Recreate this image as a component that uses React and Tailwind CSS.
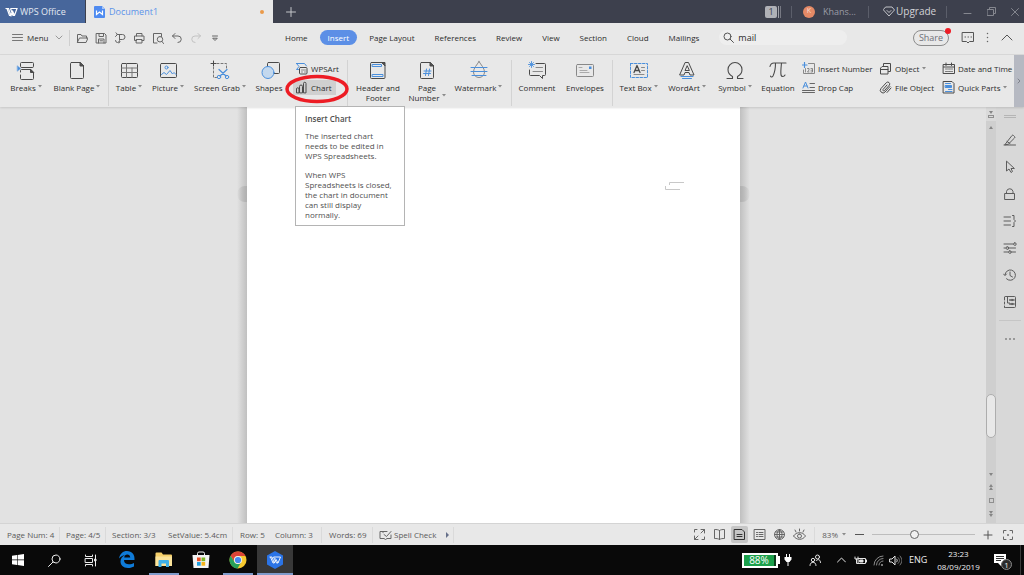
import React, { useState } from 'react';
import clsx from 'clsx';

const DARK = '#4a4a4a';
const BLUE = '#4a8fdc';

// Small svg wrapper, children are drawn at 1 unit = 1px
const Icon = ({ w = 20, h = w, color = DARK, sw = 1, className, children }) => (
    <svg
        width={w}
        height={h}
        viewBox={`0 0 ${w} ${h}`}
        fill="none"
        stroke={color}
        strokeWidth={sw}
        strokeLinejoin="round"
        strokeLinecap="round"
        className={clsx('shrink-0', className)}
        aria-hidden="true"
    >
        {children}
    </svg>
);

const Caret = ({ className }) => (
    <svg width="4" height="3" viewBox="0 0 4 3" className={clsx('inline-block shrink-0', className)} aria-hidden="true">
        <path d="M0 0h4L2 2.6z" fill="#8a8a8a" />
    </svg>
);

const VLine = ({ className }) => <div className={clsx('w-px shrink-0', className)} />;

/* ---------- ribbon icons ---------- */

const BreaksIcon = () => (
    <Icon>
        <path d="M5.500 7.500a1 1 0 0 1-1-1v-3a1 1 0 0 1 1-1h11a1 1 0 0 1 1 1v3a1 1 0 0 1-1 1zM4.500 12v-1.500a1 1 0 0 1 1-1h9l3 3v6a1 1 0 0 1-1 1h-11a1 1 0 0 1-1-1V15" />
        <path d="M14.500 9.500v3h3z" fill={DARK} />
        <path d="M1.500 6l3 2.500-3 2.500z" fill={BLUE} stroke={BLUE} strokeWidth="0.500" />
    </Icon>
);

const BlankPageIcon = () => (
    <Icon>
        <path d="M4.500 2.500h8.500l3.500 3.500v11.500a1 1 0 0 1-1 1h-11a1 1 0 0 1-1-1v-14a1 1 0 0 1 1-1z" />
        <path d="M13 2.500v3.500h3.500z" fill={DARK} />
    </Icon>
);

const TableIcon = () => (
    <Icon>
        <rect x="2.500" y="3.500" width="16" height="14" rx="1" />
        <path d="M2.500 8h16M2.500 12.500h16M7.500 3.500v14M13 8v9.500" stroke="#777" />
    </Icon>
);

const PictureIcon = () => (
    <Icon>
        <rect x="2.500" y="3.500" width="16" height="14" rx="1" />
        <circle cx="8.500" cy="7.500" r="1.500" stroke={BLUE} />
        <path d="M3.500 14.500l2.500-2 2.500 2 3.500-4 2.500 3.500 1.500-1.500 2 2" stroke={BLUE} />
    </Icon>
);

const ScreenGrabIcon = () => (
    <Icon>
        <path d="M3.500 1v5M1 3.500h5" />
        <path d="M7 3.500h9.500v6M3.500 7v10.500h3" strokeDasharray="2 2" stroke="#777" />
        <path d="M9 9.500l7 6.500M17 9.500l-7 6.500" stroke={BLUE} strokeWidth="1.200" />
        <circle cx="9" cy="17" r="1.700" stroke={BLUE} />
        <circle cx="17" cy="17" r="1.700" stroke={BLUE} />
    </Icon>
);

const ShapesIcon = () => (
    <Icon w={24} h={20}>
        <rect x="10.500" y="2.500" width="12" height="11" rx="1" />
        <circle cx="11" cy="12.500" r="6" fill="#c3d8ee" stroke={BLUE} />
    </Icon>
);

const HeaderFooterIcon = () => (
    <Icon>
        <path d="M3.500 2.500h10.500l3 3v12a1 1 0 0 1-1 1h-12.500a1 1 0 0 1-1-1v-14a1 1 0 0 1 1-1z" />
        <path d="M14 2.500h3v3z" fill={DARK} />
        <path d="M4.500 4.500h9v2h-9zM4.500 14.500h10.500v2h-10.500z" stroke={BLUE} />
    </Icon>
);

const PageNumberIcon = () => (
    <Icon>
        <path d="M4.500 2.500h8.500l3.500 3.500v11.500a1 1 0 0 1-1 1h-11a1 1 0 0 1-1-1v-14a1 1 0 0 1 1-1z" />
        <path d="M13 2.500v3.500h3.500z" fill={DARK} />
        <path d="M9.500 9l-1 6.500M12.500 9l-1 6.500M7 11h7M6.500 13.500h7" stroke={BLUE} />
    </Icon>
);

const WatermarkIcon = () => (
    <Icon>
        <path d="M10 1.500c2 3.500 5.500 6.500 5.500 10.500a5.500 5.500 0 0 1-11 0c0-4 3.500-7 5.500-10.500z" stroke="#888" />
        <path d="M2 7.500h16M2 11.500h16M3 15.500h14" stroke={BLUE} />
    </Icon>
);

const CommentIcon = () => (
    <Icon>
        <path d="M9 3.500h8.500a1 1 0 0 1 1 1v10a1 1 0 0 1-1 1h-2v3l-3-3H3.500a1 1 0 0 1-1-1V10" />
        <path d="M9 7.500h6.500M6 11.500h9.500" stroke="#8a8a8a" />
        <path d="M4.500 1.500v6M1.500 4.500h6M2.500 2.500l4 4M6.500 2.500l-4 4" stroke={BLUE} strokeWidth="0.900" />
    </Icon>
);

const EnvelopeIcon = () => (
    <Icon>
        <rect x="1.500" y="4.500" width="17" height="12" rx="1" stroke="#888" />
        <path d="M4 7.500h3M5 10.500h7M5 12.500h9" stroke="#aaa" />
        <path d="M14 6.500h2.500v2.500H14z" fill={BLUE} stroke="none" />
    </Icon>
);

const TextBoxIcon = () => (
    <Icon>
        <rect x="1.500" y="3.500" width="17" height="14" stroke={BLUE} strokeDasharray="2.500 1.500" />
        <path d="M5 12.500l3-7 3 7M6 10.500h4" strokeWidth="1.300" />
        <path d="M12.500 7.500h3M12.500 10.500h3M5 14.500h10" stroke="#8a8a8a" />
    </Icon>
);

const WordArtIcon = () => (
    <Icon>
        <path d="M8.500 2.500h3l5.500 12.500h-4l-1-2.500H8L7 15H3z" />
        <path d="M10 6l-2 4.500h4z" />
        <path d="M4 16.500h12M5.500 18.500h9" stroke={BLUE} />
    </Icon>
);

const SymbolIcon = () => (
    <Icon sw={1.1}>
        <path d="M2 18.500h5.500v-2C4.500 15 3 12.500 3 9.500a7 7 0 0 1 14 0c0 3-1.500 5.500-4.500 7v2H18" />
    </Icon>
);

const EquationIcon = () => (
    <Icon sw={1.1}>
        <path d="M2 6.500c.5-2.500 2-3.500 4-3.500h12M7.500 3c0 6-1 10-2.500 13-1 1.500-2.500 1-2.500 0M13.500 3c-.5 5-1 9-.5 12 .5 2 3 2 4 0" />
    </Icon>
);

const WpsArtIcon = () => (
    <Icon w={13}>
        <path d="M1.500 1.500h8l2 2.500M1.500 1.500L4 4.500l-2.500 3h2" stroke={BLUE} />
        <rect x="4.500" y="5.500" width="7.500" height="6.500" rx="1" />
        <path d="M6.500 8h4M6.500 10h1M9.500 10h1" stroke="#888" />
    </Icon>
);

const ChartIcon = () => (
    <Icon w={13}>
        <path d="M1.500 11.500V8a1 1 0 0 1 2.500 0v3.500zM4.500 11.500V5.500a1 1 0 0 1 3 0v6zM8.500 11.500v-9a1 1 0 0 1 2.500 0v9z" />
    </Icon>
);

const InsertNumberIcon = () => (
    <Icon w={13}>
        <path d="M6.500 1.500h6v10h-11V8" stroke="#888" />
        <path d="M2.500 0.500v5M0.500 3h4.500" stroke={BLUE} strokeWidth="1.200" />
        <path d="M3.500 6.500v3.500M5.500 6.500h1.500v1.500l-1.500 2h1.500M9 6.500h1.500v3.500H9M9 8.200h1.500" stroke="#666" strokeWidth="0.700" />
    </Icon>
);

const DropCapIcon = () => (
    <Icon w={13}>
        <path d="M1 7l2.500-6L6 7M2 5h3" stroke={BLUE} />
        <path d="M8 2.500h4.500M8 6.500h4.500M0.500 9.500h12M0.500 11.500h12" stroke="#666" />
    </Icon>
);

const ObjectIcon = () => (
    <Icon w={13}>
        <path d="M4.500 3.500v-2h7v8H9.500" />
        <path d="M3.500 4.500h5.500v7.500h-7.500V6.500zM1.500 7.500h7.500" />
    </Icon>
);

const ClipIcon = () => (
    <Icon w={13}>
        <path d="M11 5.500l-5 5.500a2.500 2.500 0 0 1-4-3.500l5.500-6a2 2 0 0 1 3 2.500L5.500 9.500a.8.8 0 0 1-1.500-1L8 4M12 7l-4 4.500" />
    </Icon>
);

const DateIcon = () => (
    <Icon w={13}>
        <path d="M1.500 2.500h11v9h-11zM1.500 5h11M4 1v2.500M9.500 1v2.500" />
        <path d="M3.500 7h2M6.500 7h2M9.500 7h1M3.500 9.500h2M6.500 9.500h2M9.500 9.500h1" stroke="#777" />
    </Icon>
);

const QuickPartsIcon = () => (
    <Icon w={13}>
        <path d="M1.500 0.500h8.500l2 2v9.500h-10.500z" />
        <path d="M3.500 2.500h5M6.500 8.500h3.500M3.500 10.500h6.500" stroke={BLUE} />
        <path d="M3.500 4.500h6v2h-6z" fill={BLUE} stroke={BLUE} />
    </Icon>
);

/* ---------- ribbon parts ---------- */

const BigButton = ({ icon, label, second, caret, className }) => (
    <button className={clsx('flex shrink-0 flex-col items-center whitespace-nowrap', className)}>
        {icon}
        <span className="mt-[3px] flex items-center justify-center leading-[10px]">
            {label}
            {caret && !second && <Caret className="-mt-1 ml-0.5" />}
        </span>
        {second && (
            <span className="flex items-center justify-center leading-[9px]">
                {second}
                {caret && <Caret className="-mt-1 ml-0.5" />}
            </span>
        )}
    </button>
);

const SmallButton = ({ icon, label, caret, className }) => (
    <button className={clsx('flex h-[15px] items-center gap-[3px] whitespace-nowrap', className)}>
        {icon}
        <span>{label}</span>
        {caret && <Caret />}
    </button>
);

const ChartTooltip = () => (
    <div
        role="tooltip"
        className="absolute top-[51px] left-2.5 z-20 h-[120px] w-[110px] border border-[#b4b4b4] bg-white px-[9px] py-[7px] leading-[10px] text-[#505050]"
    >
        <p className="font-semibold">Insert Chart</p>
        <p className="mt-[7px]">The inserted chart needs to be edited in WPS Spreadsheets.</p>
        <p className="mt-[9px]">When WPS Spreadsheets is closed, the chart in document can still display normally.</p>
    </div>
);

const Ribbon = () => (
    <div className="relative z-10 flex h-[52px] shrink-0 bg-[#e8e8e8] shadow-[0_1px_2px_rgba(0,0,0,0.12)]">
        <div className="flex min-w-0 flex-1 pt-[5px] pl-1.5 text-[#2c2c2c]">
            <BigButton icon={<BreaksIcon />} label="Breaks" caret className="w-10" />
            <BigButton icon={<BlankPageIcon />} label="Blank Page" caret className="w-[62px]" />
            <VLine className="h-[46px] bg-[#d3d3d3]" />
            <BigButton icon={<TableIcon />} label="Table" caret className="w-10" />
            <BigButton icon={<PictureIcon />} label="Picture" caret className="w-[38px]" />
            <BigButton icon={<ScreenGrabIcon />} label="Screen Grab" caret className="w-[66px]" />
            <BigButton icon={<ShapesIcon />} label="Shapes" className="w-8" />
            <div className="relative -mt-[5px] flex w-[62px] shrink-0 flex-col gap-1 pt-1.5 pl-2">
                <SmallButton icon={<WpsArtIcon />} label="WPSArt" className="pl-0.5" />
                <SmallButton icon={<ChartIcon />} label="Chart" className="w-[43px] bg-[#d0d0d0] pl-0.5" />
                <svg width="64" height="30" viewBox="0 0 64 30" className="pointer-events-none absolute top-[19px] left-0 z-30" aria-hidden="true">
                    <ellipse cx="32" cy="15" rx="30" ry="12.500" fill="none" stroke="#ed1c24" strokeWidth="3.500" />
                </svg>
                <ChartTooltip />
            </div>
            <VLine className="h-[46px] bg-[#d3d3d3]" />
            <BigButton icon={<HeaderFooterIcon />} label="Header and" second="Footer" className="w-[60px]" />
            <BigButton icon={<PageNumberIcon />} label="Page" second="Number" caret className="w-[38px]" />
            <BigButton icon={<WatermarkIcon />} label="Watermark" caret className="w-[65px]" />
            <VLine className="h-[46px] bg-[#d3d3d3]" />
            <BigButton icon={<CommentIcon />} label="Comment" className="w-[50px]" />
            <BigButton icon={<EnvelopeIcon />} label="Envelopes" className="w-[46px]" />
            <VLine className="ml-1 h-[46px] bg-[#d3d3d3]" />
            <BigButton icon={<TextBoxIcon />} label="Text Box" caret className="w-[51px]" />
            <BigButton icon={<WordArtIcon />} label="WordArt" caret className="w-[46px]" />
            <BigButton icon={<SymbolIcon />} label="Symbol" caret className="w-[50px]" />
            <BigButton icon={<EquationIcon />} label="Equation" className="w-9" />
            <div className="ml-1.5 flex w-[77px] shrink-0 flex-col gap-1 pt-px">
                <SmallButton icon={<InsertNumberIcon />} label="Insert Number" />
                <SmallButton icon={<DropCapIcon />} label="Drop Cap" />
            </div>
            <div className="flex w-[63px] shrink-0 flex-col gap-1 pt-px">
                <SmallButton icon={<ObjectIcon />} label="Object" caret />
                <SmallButton icon={<ClipIcon />} label="File Object" />
            </div>
            <div className="flex min-w-0 flex-1 flex-col gap-1 overflow-hidden pt-px">
                <SmallButton icon={<DateIcon />} label="Date and Time" />
                <SmallButton icon={<QuickPartsIcon />} label="Quick Parts" caret />
            </div>
        </div>
        <button className="flex w-2.5 shrink-0 items-center justify-center bg-[#b6b9c2]" aria-label="More tools">
            <Icon w={4} h={6} color="#80838c">
                <path d="M1 1l2 2-2 2" />
            </Icon>
        </button>
    </div>
);

/* ---------- title bar ---------- */

const WpsLogo = () => (
    <svg width="13" height="10" viewBox="0 0 13 10" fill="none" stroke="#fff" strokeWidth="1.200" aria-hidden="true" className="shrink-0">
        <path d="M0.500 1.500H3.500L6 8.500 7.300 5M2 1.500L4.500 8.500H6M5.500 1.500H12L9.500 8.500H8L5.500 1.500M9.500 8.500L7.300 3.500" />
    </svg>
);

const TitleBar = () => (
    <header className="flex h-[23px] shrink-0 items-stretch bg-[#3d404d] text-[9px]">
        <button className="flex w-[85px] items-center gap-0.5 bg-[#47669b] pl-[5px] text-[#e3e8f1]">
            <WpsLogo />
            WPS Office
        </button>
        <button className="ml-px flex w-[187px] items-center bg-[#e8e8e8] pr-[9px] pl-2 text-[#5b93e8]">
            <svg width="11" height="12" viewBox="0 0 11 12" className="mr-1 shrink-0" aria-hidden="true">
                <path d="M1 0h7l3 3v8a1 1 0 0 1-1 1H1a1 1 0 0 1-1-1V1a1 1 0 0 1 1-1z" fill="#4f8bf0" />
                <path d="M8 0v3h3z" fill="#a9c7f7" />
                <path d="M2.500 4.500v4l3-2.500 3 2.500v-4" fill="none" stroke="#fff" strokeWidth="1.200" />
            </svg>
            <span>Document1</span>
            <span className="ml-auto size-1 rounded-full bg-[#ea9a4a]" />
        </button>
        <button className="ml-3 flex w-3 items-center justify-center" aria-label="New tab">
            <Icon w={10} color="#c4c5ca">
                <path d="M5 0.500v9M0.500 5h9" />
            </Icon>
        </button>
        <div className="ml-auto flex items-center">
            <span className="flex h-3 w-3 items-center justify-center rounded-xs bg-[#b0b1b7] text-[#3d404d]">1</span>
            <VLine className="ml-px h-3 bg-[#a0a1a8]" />
            <VLine className="ml-px h-3 bg-[#777983]" />
            <VLine className="ml-2.5 h-3 bg-[#5b5e6a]" />
            <span className="ml-[11px] flex size-3 items-center justify-center rounded-full bg-[#e58a66] text-[7px] text-[#f8ddd2]">K</span>
            <span className="ml-2 w-[34px] text-[#9a9ca5]">Khans...</span>
            <VLine className="ml-[11px] h-3 bg-[#5b5e6a]" />
            <button className="ml-3.5 flex w-[53px] items-center gap-px text-[10px] text-[#d2d3d7]">
                <Icon w={12} h={11} color="#c4c5ca">
                    <path d="M3 1h6l2.500 3L6 10 0.500 4zM4 4.500l2 2 2-2" />
                </Icon>
                Upgrade
            </button>
            <VLine className="ml-2.5 h-3 bg-[#5b5e6a]" />
            <div className="ml-4 flex items-center gap-[15px] pr-[5px]">
                <button aria-label="Minimize">
                    <Icon w={9} color="#85878f">
                        <path d="M1 6.500h7" />
                    </Icon>
                </button>
                <button aria-label="Restore">
                    <Icon w={9} color="#85878f">
                        <path d="M0.500 2.500h6v6h-6zM2.500 2.500v-2h6v6h-2" />
                    </Icon>
                </button>
                <button aria-label="Close">
                    <Icon w={8} color="#85878f">
                        <path d="M0.500 0.500l7 7M7.500 0.500l-7 7" />
                    </Icon>
                </button>
            </div>
        </div>
    </header>
);

/* ---------- menu row ---------- */

const TABS = ['Home', 'Insert', 'Page Layout', 'References', 'Review', 'View', 'Section', 'Cloud', 'Mailings'];

const QUICK_ACTIONS = [
    { name: 'Open', body: <path d="M1.500 10V2.500h3.500l1 1.500h4.500v2M1.500 10L3.500 6h8.500l-2 4.500H1.500z" /> },
    { name: 'Save', body: <path d="M1.500 1.500h8l1.500 1.500v8H1.500zM4 1.500v3h4.500v-3M3.500 11V7h5.500v4M5 8.800h2.500" /> },
    { name: 'Export', body: <path d="M3 2.500h5.500a2.500 2.500 0 0 1 0 5H5.500M5.500 3v5.500a2 2 0 0 1-4 0M1.500 4.500L3.500 2.500 2 0.800M5 11l1-1.500" /> },
    { name: 'Print', body: <path d="M3.500 4V1.500h5.500V4M3.500 8.500h-2v-4.500h9.500v4.500H9M3.500 7.500h5.500v3.500H3.500z" /> },
    { name: 'Print Preview', body: <path d="M5 11H1.500V1.500h8v3M10 9.500l1.500 2M8 4.500a2.700 2.700 0 1 1 0 5.500 2.700 2.700 0 0 1 0-5.500" /> },
    { name: 'Undo', body: <path d="M4 1.500L1.500 4 4 6.500M1.500 4h5.500a3 3 0 0 1 0 6.500" /> },
    { name: 'Redo', faint: true, body: <path d="M8 1.500L10.500 4 8 6.500M10.500 4H5a3 3 0 0 0 0 6.500" /> },
    { name: 'Customize', body: <path d="M3.500 4h5M4 6.500l2 2 2-2z" /> },
];

const MenuRow = () => {
    const [tab, setTab] = useState('Insert');
    const [query, setQuery] = useState('mail');

    return (
        <div className="flex h-8 shrink-0 items-center border-b border-[#d9d9d9] bg-[#e8e8e8] pb-0.5 text-[#2c2c2c]">
            <button className="ml-3 flex w-[51px] items-center">
                <Icon w={11} h={9} color="#777" className="mr-1">
                    <path d="M0.500 1.500h10M0.500 4.500h10M0.500 7.500h10" />
                </Icon>
                Menu
                <Icon w={8} h={5} color="#999" className="ml-auto">
                    <path d="M1 1l3 3 3-3" />
                </Icon>
            </button>
            <VLine className="ml-1.5 h-4 bg-[#cfcfcf]" />
            <div className="ml-1.5 flex gap-[7px]">
                {QUICK_ACTIONS.map((a) => (
                    <button key={a.name} aria-label={a.name}>
                        <Icon w={12} color={a.faint ? '#c2c2c2' : '#666'}>{a.body}</Icon>
                    </button>
                ))}
            </div>

            <nav className="ml-14 flex gap-1">
                {TABS.map((name) => (
                    <button
                        key={name}
                        onClick={() => setTab(name)}
                        className={clsx(
                            'h-[15px] rounded-full px-2 whitespace-nowrap',
                            tab === name && 'bg-[#5c8fe6] font-medium text-white'
                        )}
                    >
                        {name}
                    </button>
                ))}
            </nav>

            <label className="ml-3 flex h-[15px] w-32 shrink-0 items-center gap-1 rounded-full bg-[#eeeeee] pl-1">
                <Icon w={11} color="#555">
                    <circle cx="4.500" cy="4.500" r="3.500" />
                    <path d="M7 7l3.500 3.500" />
                </Icon>
                <input
                    type="text"
                    aria-label="Search commands"
                    value={query}
                    onChange={(e) => setQuery(e.target.value)}
                    className="w-20 bg-transparent text-[9px] outline-none"
                />
            </label>

            <div className="ml-auto flex items-center pr-[11px]">
                <button className="relative mr-3 h-4 w-9 rounded-full border border-[#8c8c8c] text-[9px] leading-[13px] text-[#707178]">
                    Share
                    <span className="absolute -top-[3px] -right-[3px] size-1.5 rounded-full bg-[#ee1c25]" />
                </button>
                <button aria-label="Feedback">
                    <Icon w={14} h={12} color="#555">
                        <path d="M1.500 0.500h11v9h-4L7 11 5.500 9.500h-4z" />
                        <path d="M4 5h.5M7 5h.5M10 5h.5" />
                    </Icon>
                </button>
                <button aria-label="More" className="ml-[11px]">
                    <Icon w={3} h={11} color="#666" sw={1.5}>
                        <path d="M1.500 1.500v0M1.500 5.500v0M1.500 9.500v0" />
                    </Icon>
                </button>
                <button aria-label="Collapse ribbon" className="ml-3">
                    <Icon w={12} h={7} color="#555">
                        <path d="M1 6l5-5 5 5" />
                    </Icon>
                </button>
            </div>
        </div>
    );
};

/* ---------- workspace ---------- */

const SIDE_TOOLS = [
    { name: 'Edit', body: <path d="M1 12h11.500M2 11.500L9 2.500a1 1 0 0 1 1.500 0l1 1a1 1 0 0 1 0 1.500L5.500 11zM4 8.500l3 2" /> },
    { name: 'Select', body: <path d="M3.500 1.500v9.500l2.500-2 2 3.500 1.500-1-1.500-3h3z" /> },
    { name: 'Protect', body: <path d="M2 6.500h9.500v6H2zM3.500 6.500V4.500a3.300 3.300 0 0 1 6.500 0v2" /> },
    { name: 'Outline', body: <path d="M1 3h6.500M1 7h6.500M1 11h6.500M9.500 1.500h1.500v4l1.500 1.500-1.500 1.500v4H9.500" /> },
    { name: 'Settings', body: <path d="M1 3h9M1 7h1.500M5.500 7h7M1 11h4M8 11h4.500M11.500 1.800a1.300 1.300 0 1 1 0 2.500 1.300 1.300 0 0 1 0-2.500M4 5.800a1.300 1.300 0 1 1 0 2.500 1.300 1.300 0 0 1 0-2.500M6.500 9.800a1.300 1.300 0 1 1 0 2.500 1.300 1.300 0 0 1 0-2.500" /> },
    { name: 'History', body: <path d="M2 7a5.200 5.200 0 1 1 1.500 3.800M0.500 6L2 7.500 3.500 6M7 4v3.500l2.500 1.500" /> },
    { name: 'Navigator', body: <path d="M2.500 1.500h9a1 1 0 0 1 1 1v9a1 1 0 0 1-1 1h-9M1.500 2v3M1.500 7v2M1.500 11v1.500M4.500 1.500v6.500h2M6.500 5a3 1.500 0 0 1 5 0 3 1.500 0 0 1-5 0M6.500 9a3 1.500 0 0 1 5 0 3 1.500 0 0 1-5 0" /> },
];

const Tri = ({ up, className }) => (
    <svg width="4" height="3" viewBox="0 0 4 3" className={className} aria-hidden="true">
        <path d={up ? 'M0 3h4L2 0z' : 'M0 0h4L2 3z'} fill="#858585" />
    </svg>
);

const Scrollbar = () => (
    <div className="flex w-2.5 shrink-0 flex-col items-center bg-[#cfcfcf]">
        <button className="flex h-3.5 w-full flex-col items-center justify-center bg-[#dadada]" aria-label="Toggle ruler">
            <Tri />
            <span className="mt-px h-[3px] w-1.5 border border-[#8f8f8f]" />
        </button>
        <button className="mt-1 flex h-[5px] items-center" aria-label="Scroll up"><Tri up /></button>
        <div className="flex-[264]" />
        <div className="h-11 w-2.5 rounded-full border border-[#adadad] bg-[#e8e8e8]" />
        <div className="flex-[35]" />
        <button aria-label="Scroll down"><Tri /></button>
        <button className="mt-2 flex flex-col" aria-label="Previous page"><Tri up /><Tri up /></button>
        <button className="mt-2 size-[5px] border border-[#8f8f8f]" aria-label="Browse object" />
        <button className="mt-2 mb-1.5 flex flex-col" aria-label="Next page"><Tri /><Tri /></button>
    </div>
);

const SideBar = () => (
    <aside className="flex w-7 shrink-0 flex-col items-center bg-[#d8d8d8]">
        <div className="mt-2 h-[3px] w-3 border-y border-[#b5b5b5]" />
        <div className="mt-[15px] flex flex-col gap-[13px]">
            {SIDE_TOOLS.map((tool) => (
                <button key={tool.name} aria-label={tool.name}>
                    <Icon w={14} color="#5c5c5c">{tool.body}</Icon>
                </button>
            ))}
        </div>
        <div className="mt-[11px] h-px w-[22px] bg-[#c6c6c6]" />
        <button className="mt-[17px] flex gap-0.5" aria-label="More panes">
            <span className="size-0.5 bg-[#999]" />
            <span className="size-0.5 bg-[#999]" />
            <span className="size-0.5 bg-[#999]" />
        </button>
    </aside>
);

const Workspace = () => (
    <main className="flex min-h-0 flex-1">
        <div className="flex min-w-0 flex-1 justify-center overflow-hidden bg-[#e2e2e2]">
            <div className="w-2.5 bg-linear-to-l from-[#c0c0c0] to-[#e2e2e2] pt-[79px]">
                <div className="h-4 rounded-l-full bg-linear-to-l from-[#b0b0b0] to-transparent" />
            </div>
            <div className="relative w-1/2 bg-white">
                <svg width="20" height="10" viewBox="0 0 20 10" className="absolute top-[74px] right-[55px]" fill="none" stroke="#c8c8c8" aria-hidden="true">
                    <path d="M4.500 4V1.500H19M0.500 5v3.500H15" />
                </svg>
            </div>
            <div className="w-2.5 bg-linear-to-r from-[#c0c0c0] to-[#e2e2e2] pt-[79px]">
                <div className="h-4 rounded-r-full bg-linear-to-r from-[#b0b0b0] to-transparent" />
            </div>
        </div>
        <Scrollbar />
        <SideBar />
    </main>
);

/* ---------- status bar ---------- */

const VIEWS = [
    { name: 'Full Screen', body: <path d="M8 1.500h3.500V5M11.500 1.500L8 5M5 11.500H1.500V8M1.500 11.500L5 8M1.500 4V1.500H4M11.500 9v2.500H9" /> },
    { name: 'Reading', body: <path d="M6.500 2.500v9M6.500 2.500c-1.500-1-3-1-5-1v9c2 0 3.500 0 5 1 1.500-1 3-1 5-1v-9c-2 0-3.500 0-5 1" /> },
    { name: 'Print Layout', active: true, body: <path d="M1.500 1.500h7.500l2.500 2.500v7.500h-10zM4 6.500h5M4 8.500h5" /> },
    { name: 'Outline View', body: <path d="M1.500 1.500h10.500v10H1.500zM3.500 4.500h1M6 4.500h4M3.500 6.500h1M6 6.500h4M3.500 8.500h1M6 8.500h4" /> },
    { name: 'Web Layout', body: <path d="M6.500 1.500a5 5 0 1 1 0 10 5 5 0 0 1 0-10M1.500 6.500h10M6.500 1.500v10M6.500 1.500c-3.500 3-3.500 7 0 10M6.500 1.500c3.500 3 3.500 7 0 10M2.500 4h8M2.500 9h8" /> },
    { name: 'Eye Protection', body: <path d="M0.500 8c3-4.500 9-4.500 12 0-3 4.500-9 4.500-12 0M6.500 6a2 2 0 1 1 0 4 2 2 0 0 1 0-4M6.500 3V1M3 4L2 2M10 4l1-2" /> },
];

const StatusBar = () => {
    const [zoom, setZoom] = useState(40);

    return (
        <div className="flex h-[22px] shrink-0 items-center border-t border-[#d4d4d4] bg-[#e8e8e8] whitespace-nowrap text-[#5a5a5a]">
            <span className="w-[59px] pl-[7px]">Page Num: 4</span>
            <VLine className="h-4 bg-[#dadada]" />
            <span className="w-[45px] pl-1.5">Page: 4/5</span>
            <VLine className="h-4 bg-[#dadada]" />
            <span className="w-[62px] pl-1.5">Section: 3/3</span>
            <span className="w-16">SetValue: 5.4cm</span>
            <VLine className="h-4 bg-[#dadada]" />
            <span className="w-[42px] pl-[7px]">Row: 5</span>
            <span className="w-[46px]">Column: 3</span>
            <VLine className="h-4 bg-[#dadada]" />
            <span className="w-[50px] pl-[7px]">Words: 69</span>
            <VLine className="h-4 bg-[#dadada]" />
            <button className="flex w-20 items-center pl-1.5">
                <Icon w={13} h={10} color="#666" className="mr-0.5">
                    <path d="M8 1.500H1v7h4l1.500 1L8 8.500h4V5M4 1.500v1" />
                    <path d="M5 4.500l2.500 2 4.500-5" />
                </Icon>
                Spell Check
                <svg width="3" height="6" viewBox="0 0 3 6" className="mr-1 ml-auto" aria-hidden="true">
                    <path d="M0 0l3 3-3 3z" fill="#66708a" />
                </svg>
            </button>
            <VLine className="h-4 bg-[#dadada]" />

            <div className="ml-auto flex items-center">
                <div className="flex gap-[3px]">
                    {VIEWS.map((v) => (
                        <button
                            key={v.name}
                            aria-label={v.name}
                            className={clsx('flex size-[17px] items-center justify-center rounded-xs', v.active && 'bg-[#c6c6c6]')}
                        >
                            <Icon w={13} color={v.active ? '#333' : '#666'}>{v.body}</Icon>
                        </button>
                    ))}
                </div>
                <VLine className="ml-1.5 h-4 bg-[#dadada]" />
                <button className="ml-[7px] flex items-center gap-1">83%<Caret /></button>
                <button className="ml-2 flex w-2.5 justify-center" aria-label="Zoom out">
                    <span className="h-px w-[9px] bg-[#555]" />
                </button>
                <input
                    type="range"
                    aria-label="Zoom"
                    value={zoom}
                    onChange={(e) => setZoom(Number(e.target.value))}
                    className="ml-2 h-2.5 w-[103px] appearance-none bg-[linear-gradient(#bdbdbd,#bdbdbd)] bg-[length:100%_1px] bg-center bg-no-repeat [&::-webkit-slider-thumb]:size-[9px] [&::-webkit-slider-thumb]:appearance-none [&::-webkit-slider-thumb]:rounded-full [&::-webkit-slider-thumb]:border [&::-webkit-slider-thumb]:border-[#666] [&::-webkit-slider-thumb]:bg-[#f0f0f0]"
                />
                <button className="ml-2" aria-label="Zoom in">
                    <Icon w={10} color="#555">
                        <path d="M5 1v8M1 5h8" />
                    </Icon>
                </button>
                <button className="mr-[11px] ml-2.5" aria-label="Fit page">
                    <Icon w={10} color="#666">
                        <path d="M0.500 3V0.500H3M7 0.500h2.500V3M9.500 7v2.500H7M3 9.500H0.500V7M4.500 5h1M5 4.500v1" />
                    </Icon>
                </button>
            </div>
        </div>
    );
};

/* ---------- windows taskbar ---------- */

const APPS = [
    {
        name: 'Microsoft Edge',
        art: (
            <path
                d="M2 8.500C3 3.500 6 1 10 1c5 0 8 3.500 7.500 9H7c0 3 2 4.300 5 4.300 2 0 3.600-.5 5-1.300v3.500c-1.600.9-3.500 1.500-6 1.500-5 0-7.500-3-7.500-6.500C3.500 8.500 5 6.500 8 5.200 5.500 5.400 3.500 6.500 2 8.500zM7.200 7.500h6C13.200 5.700 12 4.500 10.200 4.500 8.600 4.500 7.500 5.800 7.200 7.500z"
                fill="#0f7bd8"
                fillRule="evenodd"
            />
        ),
    },
    {
        name: 'File Explorer',
        running: true,
        art: (
            <>
                <path d="M1.500 3.500a1 1 0 0 1 1-1h5l1.500 2h8a1 1 0 0 1 1 1V16h-16.500z" fill="#f5cf6a" />
                <path d="M1.500 6.500h16.500V16H1.500z" fill="#fbe39a" />
                <path d="M4.500 17v-6a1 1 0 0 1 1-1h8.500a1 1 0 0 1 1 1v6h-3v-3.500H7.500V17z" fill="#3eb0ea" />
            </>
        ),
    },
    {
        name: 'Store',
        art: (
            <>
                <path d="M6.500 5V3.500A1.500 1.500 0 0 1 8 2h4a1.500 1.500 0 0 1 1.500 1.500V5" stroke="#f4f4f4" fill="none" />
                <path d="M1.500 5h17l-1 13h-15z" fill="#f4f4f4" />
                <path d="M6 7.500h3.700v3.700H6z" fill="#e8502a" />
                <path d="M10.500 7.500h3.700v3.700h-3.700z" fill="#7db726" />
                <path d="M6 12h3.700v3.700H6z" fill="#1f9fe0" />
                <path d="M10.500 12h3.700v3.700h-3.700z" fill="#f6b51c" />
            </>
        ),
    },
    {
        name: 'Chrome',
        running: true,
        art: (
            <>
                <circle cx="10" cy="10" r="8.500" fill="#f7c92f" />
                <path d="M2.600 5.800A8.500 8.500 0 0 1 17.500 6H10a4 4 0 0 0-3.500 6z" fill="#dc4437" />
                <path d="M2.600 5.800A8.500 8.500 0 0 0 9.500 18.500L13 12.500a4 4 0 0 1-6.500-.5z" fill="#27a05a" />
                <circle cx="10" cy="10" r="4" fill="#f2f2f2" />
                <circle cx="10" cy="10" r="3.100" fill="#4688ee" />
            </>
        ),
    },
    {
        name: 'WPS Office',
        running: true,
        active: true,
        art: (
            <>
                <path d="M10 1l8 4.500v9L10 19l-8-4.500v-9z" fill="#2b74e6" />
                <path d="M4.500 7H7L9.300 13 10.500 10M5.500 7L8 13H9.300M8.500 7H15.500L13 13H11.500L8.500 7M13 13L10.500 8.500" stroke="#fff" strokeWidth="0.900" fill="none" />
            </>
        ),
    },
];

const Taskbar = () => (
    <footer className="flex h-[30px] shrink-0 items-stretch bg-[#090909] text-[#f0f0f0]">
        <button className="flex w-9 items-center justify-center" aria-label="Start">
            <svg width="12" height="12" viewBox="0 0 12 12" fill="#fff" aria-hidden="true">
                <path d="M0 1.700L5 1v4.600H0zM5.600.9L12 0v5.600H5.600zM0 6.300h5v4.600l-5-.7zM5.600 6.300H12V12l-6.400-.9z" />
            </svg>
        </button>
        <button className="flex w-9 items-center justify-center" aria-label="Search">
            <Icon w={13} color="#eee">
                <circle cx="8" cy="5" r="4" />
                <path d="M5 8l-4.500 4.500" />
            </Icon>
        </button>
        <button className="mr-px flex w-9 items-center justify-center" aria-label="Task View">
            <Icon w={13} color="#eee">
                <path d="M1.500 1v1.500h7V1M1.500 12v-1.500h7V12M1.500 4.500h7v4h-7zM11.500 1v11M11 5h1v2h-1z" />
            </Icon>
        </button>
        {APPS.map((app) => (
            <button
                key={app.name}
                aria-label={app.name}
                className={clsx('relative mr-px flex w-9 items-center justify-center', app.active && 'bg-[#383838]')}
            >
                <svg width="20" height="20" viewBox="0 0 20 20" aria-hidden="true">{app.art}</svg>
                {app.running && (
                    <span className={clsx('absolute bottom-0 h-0.5 bg-[#7f9bcb]', app.active ? 'inset-x-0' : 'inset-x-[3px]')} />
                )}
            </button>
        ))}

        <div className="ml-auto flex items-center">
            <div className="flex h-[15px] w-9 items-center border-2 border-white bg-[#0c3d1c]">
                <span className="flex h-full w-[30px] items-center justify-center bg-[#1ba04b] text-[10px] leading-none text-white">88%</span>
            </div>
            <span className="h-2 w-0.5 bg-white" />
            <svg width="8" height="12" viewBox="0 0 8 12" fill="#fff" className="ml-1" aria-hidden="true">
                <path d="M2 0h1v3h2V0h1v3h1.500v2.500L5.500 8h-1v4h-1V8h-1L0.500 5.500V3H2z" />
            </svg>
            <button className="ml-[17px]" aria-label="People">
                <Icon w={12} h={12} color="#e6e6e6">
                    <circle cx="8.500" cy="3" r="2" />
                    <circle cx="4" cy="6" r="1.700" />
                    <path d="M1 11.500c0-4.500 6-4.500 6 0M7.500 6.500c2-2 4-.5 4 2" />
                </Icon>
            </button>
            <button className="ml-4" aria-label="Show hidden icons">
                <Icon w={9} h={6} color="#e6e6e6">
                    <path d="M0.500 5l4-4 4 4" />
                </Icon>
            </button>
            <Icon w={13} h={9} color="#e6e6e6" className="ml-2">
                <path d="M4.500 2.500h7v5h-7zM12.500 4v2M1 1v2h3V1M2.500 3v4.500h2" />
                <path d="M6 4h3v2H6z" fill="#e6e6e6" />
            </Icon>
            <Icon w={11} h={11} color="#8b8b8b" className="ml-1.5">
                <path d="M1 10a9 9 0 0 1 9-9M3.500 10A6.500 6.500 0 0 1 10 3.500M6 10a4 4 0 0 1 4-4" />
                <path d="M8.500 10h1" stroke="#fff" />
            </Icon>
            <Icon w={13} h={11} color="#e6e6e6" className="ml-[5px]">
                <path d="M1 4h2l3-3v9L3 7H1zM7.500 4c1 1 1 2 0 3" />
                <path d="M9 2.500c2 2 2 4 0 6M11 1c2.500 3 2.500 6 0 9" stroke="#777" />
            </Icon>
            <span className="ml-[7px] w-[18px] text-[9px]">ENG</span>
            <div className="ml-[9px] w-[45px] text-center leading-[13px]">
                <div>23:23</div>
                <div>08/09/2019</div>
            </div>
            <button className="relative ml-[13px] h-5 w-[18px]" aria-label="Notifications">
                <svg width="12" height="13" viewBox="0 0 12 13" className="absolute top-1 left-0" aria-hidden="true">
                    <path d="M0 0h12v9H7v3L4 9H0z" fill="#fff" />
                    <path d="M2 2.500h8M2 4.500h8M2 6.500h5" stroke="#333" />
                </svg>
                <span className="absolute right-0 bottom-0 flex size-[11px] items-center justify-center rounded-full border border-[#888] bg-[#2a2a2a]">1</span>
            </button>
            <VLine className="mr-[3px] ml-2 h-[30px] bg-[#3a3a3a]" />
        </div>
    </footer>
);

const App = () => (
    <div className="flex h-screen flex-col overflow-hidden bg-[#e2e2e2] font-['Open_Sans','Noto_Sans',sans-serif] text-[8px]">
        <TitleBar />
        <MenuRow />
        <Ribbon />
        <Workspace />
        <StatusBar />
        <Taskbar />
    </div>
);

export default App;
